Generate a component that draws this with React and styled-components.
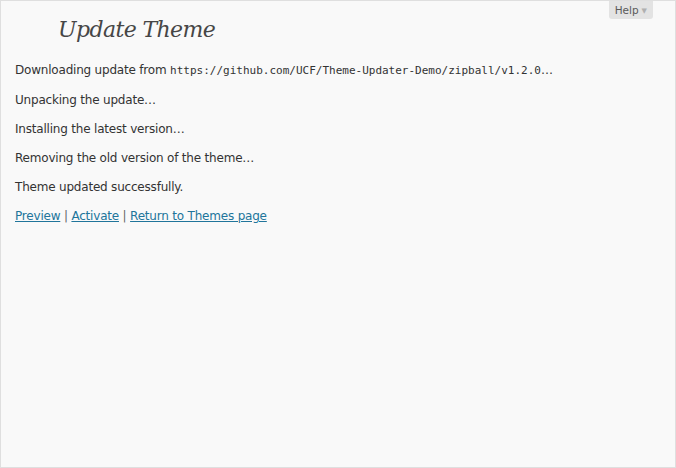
import React from "react";
import styled, { createGlobalStyle } from "styled-components";

const Global = createGlobalStyle`
  html, body { margin: 0; padding: 0; background: #f9f9f9; }
  body { font-family: "DejaVu Sans", "Lucida Grande", sans-serif; }
`;

const Frame = styled.div`
  box-sizing: border-box;
  width: 676px;
  height: 468px;
  border: 1px solid #dfdfdf;
  background: #f9f9f9;
  position: relative;
  overflow: hidden;
`;

const HelpTab = styled.div`
  position: absolute;
  top: 0;
  right: 22px;
  height: 18px;
  padding: 0 6px 0 6px;
  background: #e3e3e3;
  border-radius: 0 0 3px 3px;
  display: flex;
  align-items: center;
  gap: 3px;
  font-family: "DejaVu Sans", sans-serif;
  font-size: 10.5px;
  color: #5a5a5a;
`;

const Arrow = styled.span`
  font-size: 7px;
  color: #b0b0b0;
  margin-top: 2px;
`;

const Content = styled.div`
  padding: 0 14px;
`;

const Title = styled.h2`
  margin: 0;
  padding: 14px 0 0 43px;
  font-family: "DejaVu Serif", Georgia, serif;
  font-style: italic;
  font-weight: normal;
  font-size: 22px;
  line-height: 29px;
  color: #464646;
  letter-spacing: -0.6px;
`;

const Log = styled.div`
  margin-top: 17px;
  display: flex;
  flex-direction: column;
  gap: 11px;
`;

const Line = styled.p`
  margin: 0;
  font-size: 12px;
  line-height: 18px;
  color: #333;
  letter-spacing: -0.2px;
`;

const Code = styled.code`
  font-family: "DejaVu Sans Mono", monospace;
  font-size: 11px;
  letter-spacing: 0;
`;

const Link = styled.a`
  color: #21759b;
  text-decoration: underline;
`;

const Sep = styled.span`
  color: #666;
`;

export default function App() {
  return (
    <Frame>
      <Global />
      <HelpTab>
        Help <Arrow>▼</Arrow>
      </HelpTab>
      <Content>
        <Title>Update Theme</Title>
        <Log>
          <Line>
            Downloading update from{" "}
            <Code>https://github.com/UCF/Theme-Updater-Demo/zipball/v1.2.0</Code>…
          </Line>
          <Line>Unpacking the update…</Line>
          <Line>Installing the latest version…</Line>
          <Line>Removing the old version of the theme…</Line>
          <Line>Theme updated successfully.</Line>
          <Line>
            <Link href="#">Preview</Link> <Sep>|</Sep> <Link href="#">Activate</Link>{" "}
            <Sep>|</Sep> <Link href="#">Return to Themes page</Link>
          </Line>
        </Log>
      </Content>
    </Frame>
  );
}
